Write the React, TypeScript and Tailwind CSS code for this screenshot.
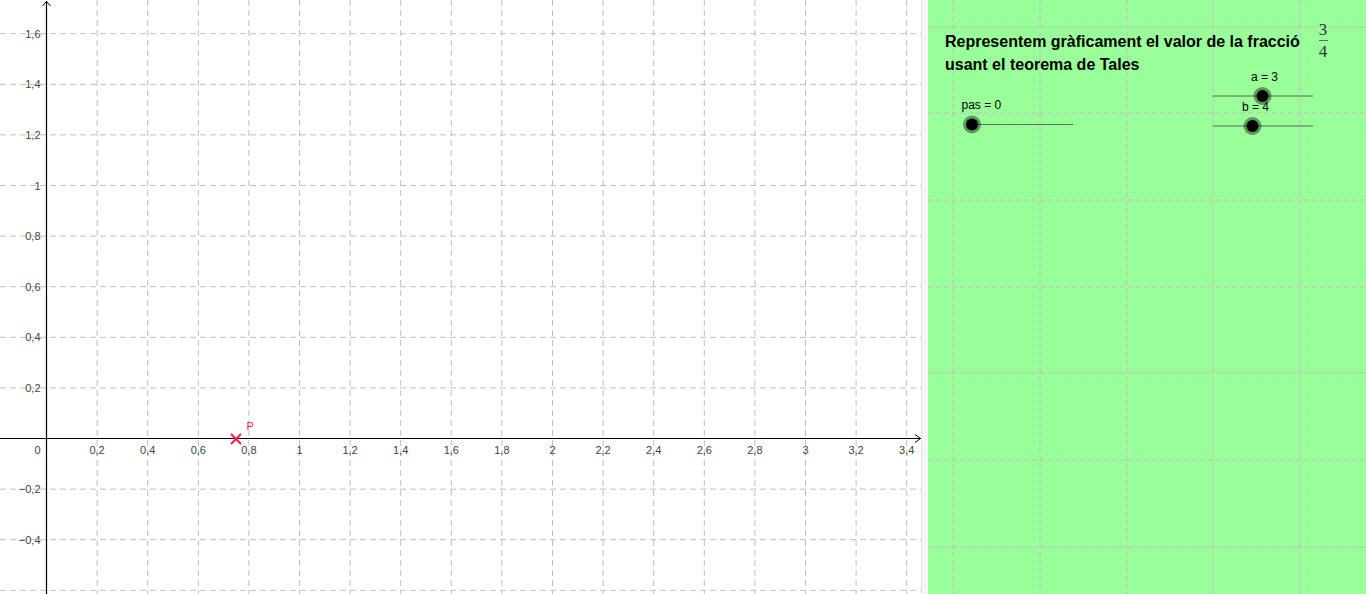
import React from 'react';

const OX = 46.5;
const OY = 438.5;
const STEP = 50.6;

function fmt(v: number) {
  const n = Number(v.toFixed(1));
  const str = Math.abs(n).toString().replace('.', ',');
  return n < 0 ? `\u2212${str}` : str;
}

function GraphView() {
  const cols = Array.from({ length: 17 }, (_, i) => i + 1);
  const rows = [-3, -2, -1, 1, 2, 3, 4, 5, 6, 7, 8];
  const labelRows = [-2, -1, 1, 2, 3, 4, 5, 6, 7, 8];
  const labelColor = '#334d33';

  return (
    <svg width={921} height={594} className="block" style={{ fontFamily: '"Liberation Sans", Arial, sans-serif' }}>
      {/* grid */}
      {cols.map((i) => (
        <line
          key={`v${i}`}
          x1={OX + i * STEP}
          x2={OX + i * STEP}
          y1={0}
          y2={594}
          stroke="#c0c0c0"
          strokeWidth={1}
          strokeDasharray="6 4"
        />
      ))}
      {rows.map((j) => (
        <line
          key={`h${j}`}
          x1={0}
          x2={921}
          y1={OY - j * STEP}
          y2={OY - j * STEP}
          stroke="#c0c0c0"
          strokeWidth={1}
          strokeDasharray="6 4"
        />
      ))}

      {/* axes */}
      <line x1={OX} x2={OX} y1={1} y2={594} stroke="#000" strokeWidth={1.2} />
      <line x1={0} x2={921} y1={OY} y2={OY} stroke="#000" strokeWidth={1.2} />
      <polyline points={`${OX - 4},6 ${OX},1.5 ${OX + 4},6`} fill="none" stroke="#000" strokeWidth={1} />
      <polyline points={`915,${OY - 4} 920.5,${OY} 915,${OY + 4}`} fill="none" stroke="#000" strokeWidth={1} />

      {/* labels */}
      <text x={37.5} y={453.5} fontSize={11} fill={labelColor} textAnchor="middle">0</text>
      {cols.map((i) => (
        <text key={`lx${i}`} x={OX + i * STEP} y={453.5} fontSize={11} fill={labelColor} textAnchor="middle">
          {fmt(i * 0.2)}
        </text>
      ))}
      {labelRows.map((j) => (
        <text key={`ly${j}`} x={40.5} y={OY - j * STEP + 4} fontSize={11} fill={labelColor} textAnchor="end">
          {fmt(j * 0.2)}
        </text>
      ))}

      {/* point P */}
      <g stroke="#ff1a4a" strokeWidth={2}>
        <line x1={231} y1={434} x2={241} y2={444} />
        <line x1={231} y1={444} x2={241} y2={434} />
      </g>
      <text x={246.5} y={429.5} fontSize={11} fill="#ff1a4a">P</text>
    </svg>
  );
}

function Slider({ x1, x2, y, knob, label, lx, ly }: { x1: number; x2: number; y: number; knob: number; label: string; lx: number; ly: number }) {
  return (
    <g>
      <text x={lx} y={ly} fontSize={12} fill="#000">{label}</text>
      <line x1={x1} x2={x2} y1={y} y2={y} stroke="#5f6b5f" strokeWidth={1.2} />
      <circle cx={knob} cy={y} r={9} fill="#000" fillOpacity={0.4} />
      <circle cx={knob} cy={y} r={6} fill="#000" />
    </g>
  );
}

function ControlView() {
  // local coordinates: panel starts at page x=928
  const vx = [25, 112, 199, 285, 372];
  const hy = [27, 113, 200, 287, 373, 460, 547];
  return (
    <div className="relative h-full flex-1 bg-[#99ff99] overflow-hidden">
      <svg width={438} height={594} className="absolute inset-0 block" style={{ fontFamily: '"Liberation Sans", Arial, sans-serif' }}>
        {vx.map((x) => (
          <line key={`v${x}`} x1={x} x2={x} y1={0} y2={594} stroke="#c9b6c9" strokeWidth={1} strokeDasharray="5 3" />
        ))}
        {hy.map((y) => (
          <line key={`h${y}`} x1={0} x2={438} y1={y} y2={y} stroke="#c9b6c9" strokeWidth={1} strokeDasharray="5 3" />
        ))}

        <Slider x1={44} x2={145} y={124.5} knob={44} label="pas = 0" lx={33.5} ly={109} />
        <Slider x1={284.5} x2={385} y={96} knob={334.5} label="a = 3" lx={323} ly={81} />
        <Slider x1={284.5} x2={385} y={126} knob={324.5} label="b = 4" lx={314} ly={111} />
      </svg>

      <div className="relative pl-[17px] pt-[30px] text-[16px] leading-[23px] font-bold text-black font-['Liberation_Sans',Arial,sans-serif]">
        <p>Representem gràficament el valor de la fracció</p>
        <p>usant el teorema de Tales</p>
      </div>

      <div className="absolute left-[388px] top-[22px] flex w-[14px] flex-col items-center text-[17px] leading-[15px] text-[#333] font-['Liberation_Serif','Times_New_Roman',serif]">
        <span>3</span>
        <span className="my-[3px] h-px w-[9px] bg-[#666]" />
        <span>4</span>
      </div>
    </div>
  );
}

export default function App() {
  return (
    <div className="flex h-[594px] w-[1366px] overflow-hidden bg-white">
      <div className="h-full w-[921px] shrink-0">
        <GraphView />
      </div>
      <div className="h-full w-px shrink-0 bg-[#dedede]" />
      <div className="h-full w-[6px] shrink-0 bg-[#f5f5f5]" />
      <ControlView />
    </div>
  );
}
